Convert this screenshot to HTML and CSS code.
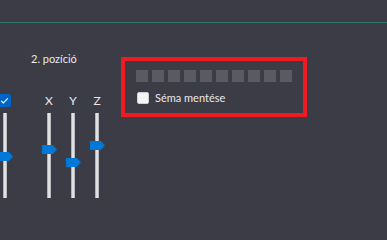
FILE: index.html
```html
<!DOCTYPE html>
<html lang="hu">
<head>
<meta charset="utf-8">
<title>Pozíció</title>
<link rel="stylesheet" href="styles.css">
</head>
<body>
<div class="topbar"></div>
<div class="content">
  <section class="position-panel">
    <div class="panel-title">2. pozíció</div>
    <div class="sliders">
      <div class="slider-col">
        <div class="slider-head">
          <span class="check-on">
            <svg width="13" height="13" viewBox="0 0 13 13"><path d="M3.2 6.8 L5.4 9 L9.8 4.4" fill="none" stroke="#fff" stroke-width="1.2"/></svg>
          </span>
        </div>
        <div class="track"><span class="thumb" style="top:39px"></span></div>
      </div>
      <div class="slider-col first-axis">
        <div class="slider-head">X</div>
        <div class="track"><span class="thumb" style="top:32px"></span></div>
      </div>
      <div class="slider-col">
        <div class="slider-head">Y</div>
        <div class="track"><span class="thumb" style="top:45px"></span></div>
      </div>
      <div class="slider-col">
        <div class="slider-head">Z</div>
        <div class="track"><span class="thumb" style="top:28px"></span></div>
      </div>
    </div>
  </section>
  <section class="schema-box">
    <div class="swatches">
      <span class="swatch"></span><span class="swatch"></span><span class="swatch"></span><span class="swatch"></span><span class="swatch"></span>
      <span class="swatch"></span><span class="swatch"></span><span class="swatch"></span><span class="swatch"></span><span class="swatch"></span>
    </div>
    <label class="save-row">
      <span class="check-off"></span>
      <span class="save-label">Séma mentése</span>
    </label>
  </section>
</div>
</body>
</html>
```
FILE: styles.css
```css
* { box-sizing: border-box; }
html, body {
  margin: 0;
  padding: 0;
  height: 100%;
  background: #3c3c46;
  overflow: hidden;
}
body {
  font-family: Lato, "Noto Sans", sans-serif;
  font-size: 11px;
  color: #e8e8ec;
}
.topbar {
  height: 23px;
  border-bottom: 1px solid #2f716d;
}
.content {
  display: flex;
  align-items: flex-start;
  margin-top: 27px;
}
.position-panel {
  margin-left: -7px;
  width: 116px;
}
.panel-title {
  line-height: 17px;
  margin-left: 38px;
  white-space: nowrap;
}
.sliders {
  display: flex;
  margin-top: 27px;
}
.slider-col {
  width: 24px;
  display: flex;
  flex-direction: column;
  align-items: center;
}
.first-axis { margin-left: 20px; }
.slider-head {
  height: 14px;
  line-height: 14px;
  margin-bottom: 5px;
  font-size: 12px;
  color: #e8e8ec;
}
.check-on {
  display: block;
  width: 13px;
  height: 13px;
  border-radius: 2px;
  background: #0063c8;
  margin-left: -1px;
}
.check-on svg { display: block; }
.track {
  position: relative;
  width: 4px;
  height: 85px;
  background: linear-gradient(to right, #9a9aa0 0, #e2e2e4 35%, #e2e2e4 65%, #a4a4aa 100%);
}
.thumb {
  position: absolute;
  left: -5px;
  width: 15px;
  height: 9px;
  background: #0078d7;
  clip-path: polygon(0 0, 72% 0, 100% 50%, 72% 100%, 0 100%);
}
.schema-box {
  margin-top: 7px;
  margin-left: 12px;
  width: 186px;
  border: 4px solid #ed1c24;
  padding: 9px 11px;
}
.swatches {
  display: flex;
  gap: 4px;
}
.swatch {
  width: 12px;
  height: 12px;
  background: #5a5a62;
}
.save-row {
  display: flex;
  align-items: center;
  margin-top: 9px;
  height: 13px;
}
.check-off {
  width: 12px;
  height: 12px;
  margin-left: 1px;
  background: #f4f4f4;
  border: 1px solid #d0d0d4;
  border-radius: 2px;
}
.save-label {
  margin-left: 6px;
  line-height: 13px;
  white-space: nowrap;
}
```
